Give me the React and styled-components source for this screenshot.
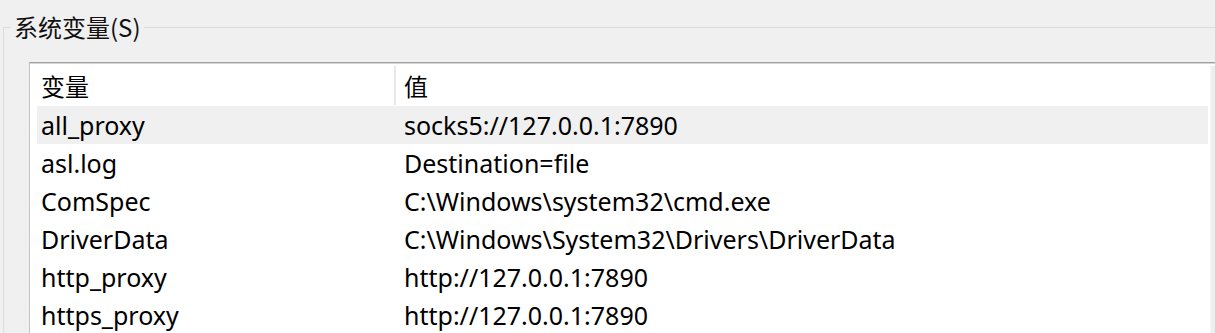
import React from 'react';
import styled, { createGlobalStyle } from 'styled-components';

const GlobalStyle = createGlobalStyle`
    html, body {
        margin: 0;
        padding: 0;
        background: #f0f0f0;
        overflow: hidden;
    }
    body {
        font-family: "Noto Sans", "Noto Sans CJK SC", sans-serif;
        color: #000;
    }
`;

const Page = styled.div`
    width: 1215px;
    height: 333px;
    overflow: hidden;
    padding: 13px 0 0 3px;
    box-sizing: border-box;
`;

const GroupBox = styled.fieldset`
    margin: 0;
    padding: 0;
    width: 1260px;
    height: 400px;
    border: 1px solid #dcdcdc;
    box-sizing: border-box;
`;

const Title = styled.legend`
    margin-left: 7px;
    padding: 0 3px;
    font-family: "Noto Sans CJK SC", sans-serif;
    font-size: 24px;
    line-height: 28px;
    color: #111;
`;

const ListBox = styled.div`
    display: flex;
    margin: 21px 0 0 25px;
    width: 1198px;
    height: 300px;
    background: #fff;
    border-top: 1px solid #a0a0a0;
    border-left: 1px solid #c4c4c4;
    box-shadow: inset 0 1px 0 #d4d4d4;
`;

const Body = styled.div`
    flex: 1;
    padding-left: 7px;
    padding-top: 1px;
`;

const Header = styled.div`
    display: flex;
    height: 42px;
    align-items: stretch;
    background: #fff;
`;

const HeaderCell = styled.div`
    display: flex;
    align-items: center;
    width: ${p => p.$width || 'auto'};
    flex: ${p => (p.$width ? 'none' : 1)};
    padding-left: ${p => p.$pad}px;
    font-family: "Noto Sans CJK SC", sans-serif;
    font-size: 24px;
    box-sizing: border-box;
`;

const Divider = styled.div`
    width: 2px;
    margin: 2px 0 1px;
    background: #e8e8e8;
`;

const Row = styled.div`
    display: flex;
    height: 38px;
    align-items: center;
    background: ${p => (p.$selected ? '#f0f0f0' : '#fff')};
    font-size: 25px;
    white-space: nowrap;
`;

const Cell = styled.div`
    width: ${p => p.$width || 'auto'};
    flex: ${p => (p.$width ? 'none' : 1)};
    padding-left: ${p => p.$pad}px;
    box-sizing: border-box;
`;

const ScrollTrack = styled.div`
    width: 17px;
    margin: 3px 0 0 2px;
    background: #eeeeee;
    border-left: 1px solid #f7f7f7;
`;

const rows = [
    ['all_proxy', 'socks5://127.0.0.1:7890'],
    ['asl.log', 'Destination=file'],
    ['ComSpec', 'C:\\Windows\\system32\\cmd.exe'],
    ['DriverData', 'C:\\Windows\\System32\\Drivers\\DriverData'],
    ['http_proxy', 'http://127.0.0.1:7890'],
    ['https_proxy', 'http://127.0.0.1:7890'],
];

export default function App() {
    return (
        <Page>
            <GlobalStyle />
            <GroupBox>
                <Title>系统变量(S)</Title>
                <ListBox>
                    <Body>
                        <Header>
                            <HeaderCell $width="357px" $pad={4}>变量</HeaderCell>
                            <Divider />
                            <HeaderCell $pad={8}>值</HeaderCell>
                        </Header>
                        {rows.map(([name, value], i) => (
                            <Row key={name} $selected={i === 0}>
                                <Cell $width="359px" $pad={4}>{name}</Cell>
                                <Cell $pad={8}>{value}</Cell>
                            </Row>
                        ))}
                    </Body>
                    <ScrollTrack />
                </ListBox>
            </GroupBox>
        </Page>
    );
}
